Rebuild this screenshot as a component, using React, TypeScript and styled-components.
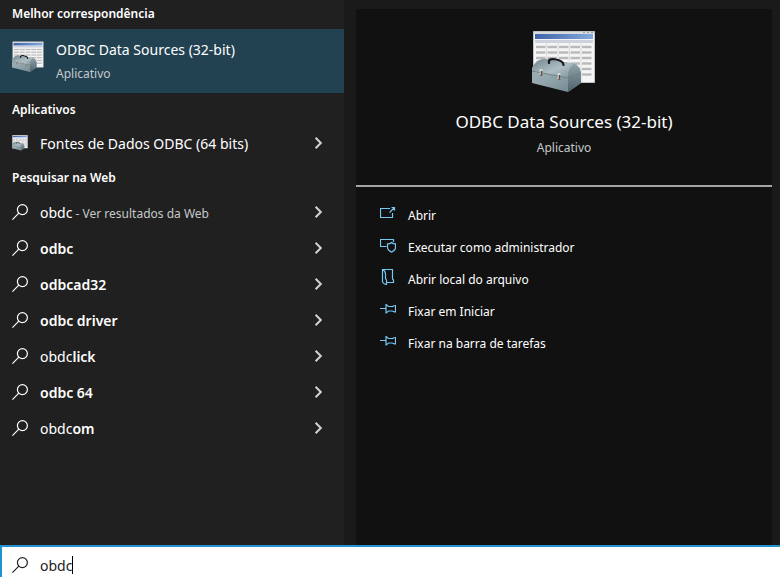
import React, { useId, useState } from "react";
import styled, { createGlobalStyle } from "styled-components";

const GlobalStyle = createGlobalStyle`
  *, *::before, *::after { box-sizing: border-box; }
  body {
    margin: 0;
    background: #1a1a1a;
    color: #fff;
    font-family: "Noto Sans", "Open Sans", sans-serif;
    font-size: 14px;
  }
  button, input { font: inherit; color: inherit; }
`;

const Page = styled.div`
  display: flex;
  flex-direction: column;
  min-height: 100vh;
`;

const Panels = styled.main`
  display: flex;
  flex: 1;
  gap: 12px;
  padding-right: 8px;
`;

const Results = styled.section`
  flex: 0 0 344px;
  background: #202020;
`;

const GroupTitle = styled.h2<{ $first?: boolean }>`
  display: flex;
  align-items: center;
  height: ${(p) => (p.$first ? 29 : 32)}px;
  margin: 0;
  padding: 0 12px ${(p) => (p.$first ? 2 : 0)}px;
  font-size: 12px;
  font-weight: 600;
`;

const BestMatch = styled.button`
  display: flex;
  align-items: flex-start;
  gap: 12px;
  width: 100%;
  height: 64px;
  padding: 12px 12px 0;
  border: 0;
  background: #224252;
  text-align: left;
`;

const BestText = styled.span`
  display: flex;
  flex-direction: column;
  gap: 6px;
  line-height: 18px;
`;

const Muted = styled.span`
  color: #c4c8ca;
  font-size: 12px;
`;

const List = styled.ul`
  margin: 0;
  padding: 1px 0 0;
  list-style: none;
`;

const Row = styled.button`
  display: flex;
  align-items: center;
  gap: 12px;
  width: 100%;
  height: 36px;
  padding: 0 20px 0 12px;
  border: 0;
  background: none;
  text-align: left;
  &:hover { background: #2d2d2d; }
`;

const RowLabel = styled.span`
  flex: 1;
  white-space: pre;
  b { font-weight: 600; }
`;

const Detail = styled.section`
  flex: 1;
  min-width: 0;
  margin-top: 9px;
  background: #111;
`;

const Hero = styled.header`
  display: flex;
  flex-direction: column;
  align-items: center;
  height: 178px;
  padding-top: 21px;
  border-bottom: 2px solid #a5a3a5;
`;

const HeroTitle = styled.h1`
  margin: 16px 0 5px;
  font-size: 17px;
  font-weight: 400;
  line-height: 24px;
`;

const Actions = styled.ul`
  margin: 0;
  padding: 12px 0;
  list-style: none;
`;

const Action = styled.button`
  display: flex;
  align-items: center;
  gap: 12px;
  width: 100%;
  height: 32px;
  padding: 0 24px;
  border: 0;
  background: none;
  font-size: 12px;
  text-align: left;
  svg { margin-bottom: 4px; }
  &:hover { background: #222; }
`;

const SearchBar = styled.label`
  display: flex;
  align-items: center;
  gap: 12px;
  height: 32px;
  padding: 6px 10px 0;
  border-top: 2px solid #2492cf;
  border-left: 2px solid #2492cf;
  background: #fff;
  color: #222;
`;

const Field = styled.span`
  display: flex;
  align-items: center;
  flex: 1;
`;

const SearchInput = styled.input`
  field-sizing: content;
  min-width: 1px;
  height: 20px;
  padding: 0;
  border: 0;
  outline: 0;
  background: none;
  caret-color: transparent;
`;

const Caret = styled.span`
  width: 1px;
  height: 18px;
  background: #000;
`;

function SearchIcon() {
  return (
    <svg width="16" height="16" viewBox="0 0 16 16" fill="none" stroke="currentColor" strokeWidth="1.2" aria-hidden="true">
      <circle cx="10.4" cy="5.6" r="5" />
      <path d="M6.8 9.2.4 15.6" />
    </svg>
  );
}

function Chevron() {
  return (
    <svg width="12" height="14" viewBox="0 0 12 14" fill="none" stroke="#d2d2d2" strokeWidth="2" aria-hidden="true">
      <path d="m3.6 1.8 5.2 5.2-5.2 5.2" />
    </svg>
  );
}

function OdbcIcon({ size }: { size: number }) {
  const id = useId();
  const rows = [17, 22.5, 28, 33.5, 39, 44.5];
  const cols = [4, 15.5, 27, 38.5, 50];
  return (
    <svg width={size} height={size} viewBox="0 0 64 64" aria-hidden="true">
      <defs>
        <linearGradient id={`${id}bar`}>
          <stop offset="0" stopColor="#3f63a8" />
          <stop offset="1" stopColor="#85aadd" />
        </linearGradient>
        <linearGradient id={`${id}front`} x1="0" y1="0" x2="1" y2="1">
          <stop offset="0" stopColor="#a3b3b9" />
          <stop offset=".45" stopColor="#94a7ae" />
          <stop offset="1" stopColor="#6e828a" />
        </linearGradient>
        <linearGradient id={`${id}lid`} x1="0" y1="0" x2="1" y2="1">
          <stop offset="0" stopColor="#71858d" />
          <stop offset=".55" stopColor="#aebec4" />
          <stop offset="1" stopColor="#7c9098" />
        </linearGradient>
        <linearGradient id={`${id}side`} x1="0" y1="0" x2="0" y2="1">
          <stop offset="0" stopColor="#8fa2a9" />
          <stop offset="1" stopColor="#4e626b" />
        </linearGradient>
      </defs>
      <path d="M1.5 1.5h61v51h-61z" fill="#f5f5f6" stroke="#c0c2c5" />
      <path d="M2 2h60v2H2z" fill="#d9dadd" />
      <path d="M51 2.5h2m2 0h2m2 0h2" stroke="#a0a4aa" />
      <path d="M3 4h58v5H3z" fill={`url(#${id}bar)`} />
      <path d="M3 10h58v3H3z" fill="#cbd2dd" />
      {rows.map((y) =>
        cols.map((x) => <path key={`${x}-${y}`} d={`M${x} ${y}h9.5`} stroke="#b9b9bb" strokeWidth="2.4" />),
      )}
      <path d="M14.500 10v42M26 10v42M37.500 10v42M49 10v42" stroke="#d5d6d8" strokeWidth=".8" />
      <path d="M0 38 5 31l7-2.500L43 34l6 9v10L36 62 0 53z" fill={`url(#${id}front)`} />
      <path d="M0 41C0 35 5 29.500 12 29l31 5c-4 1-7 5-7 14z" fill={`url(#${id}lid)`} />
      <path d="M36 48c0-8 3-13 7-14 3 1.500 5.500 4 6 9v10L36 62z" fill={`url(#${id}side)`} />
      <path d="m0 41 36 7 13-5" fill="none" stroke="#667a82" strokeWidth=".8" />
      <path d="M17 33c-1-4 3-4.500 7-3.500 5 1 7.500 2.500 7.500 5.500" fill="none" stroke="#17191b" strokeWidth="2.200" strokeLinecap="round" />
      <path d="M9 39v6M27 43v6" stroke="#d5dada" strokeWidth="2.600" />
      <path d="M9.500 41v4M27.500 45v4" stroke="#594a45" strokeWidth="1.500" />
      <path d="M8 45.500h2.500M26 49.500h2.500" stroke="#82614f" />
    </svg>
  );
}

type ActionKind = "open" | "admin" | "folder" | "pin";

function ActionIcon({ kind }: { kind: ActionKind }) {
  return (
    <svg width="16" height="16" viewBox="0 0 16 16" fill="none" stroke="#76c8f4" strokeWidth="1.2" aria-hidden="true">
      {kind === "open" && <path d="M10 3.500H.5v9h12V8M9.500 7.500l5-5M11.500 2.500h3V5.500" />}
      {kind === "admin" && (
        <path d="M6.500 9.500h-6v-7h13V5M11.500 5.500c1 1 2 1.400 4 1.400v3.200c0 2.400-1.500 4-4 5-2.500-1-4-2.600-4-5V6.900c2 0 3-.4 4-1.400z" />
      )}
      {kind === "folder" && (
        <path d="M2.500.5h10v9.500l1 1v2.500H6.500M2.500.5v12.500c1 1.500 2 2.500 4 2.500V11l-1-1.500V5C5.500 3 4.500 1.500 2.500.5z" />
      )}
      {kind === "pin" && (
        <path d="M0 7.500h6M6 3.500c1 0 1.500 2 3 2h3c1.500 0 1.500-1 3.500-1v6.500c-2 0-2-1-3.500-1H9c-1.500 0-2 2-3 2z" />
      )}
    </svg>
  );
}

const suggestions: { start?: string; bold?: string; note?: string }[] = [
  { start: "obdc", note: " - Ver resultados da Web" },
  { bold: "odbc" },
  { bold: "odbcad32" },
  { bold: "odbc driver" },
  { start: "obdc", bold: "lick" },
  { bold: "odbc 64" },
  { start: "obdc", bold: "om" },
];

const actions: { kind: ActionKind; label: string }[] = [
  { kind: "open", label: "Abrir" },
  { kind: "admin", label: "Executar como administrador" },
  { kind: "folder", label: "Abrir local do arquivo" },
  { kind: "pin", label: "Fixar em Iniciar" },
  { kind: "pin", label: "Fixar na barra de tarefas" },
];

export default function App() {
  const [query, setQuery] = useState("obdc");
  return (
    <Page>
      <GlobalStyle />
      <Panels>
        <Results>
          <GroupTitle $first>Melhor correspondência</GroupTitle>
          <BestMatch type="button">
            <OdbcIcon size={32} />
            <BestText>
              <span>ODBC Data Sources (32-bit)</span>
              <Muted>Aplicativo</Muted>
            </BestText>
          </BestMatch>
          <GroupTitle>Aplicativos</GroupTitle>
          <Row type="button">
            <OdbcIcon size={16} />
            <RowLabel>Fontes de Dados ODBC (64 bits)</RowLabel>
            <Chevron />
          </Row>
          <GroupTitle>Pesquisar na Web</GroupTitle>
          <List>
            {suggestions.map((s, i) => (
              <li key={i}>
                <Row type="button">
                  <SearchIcon />
                  <RowLabel>
                    {s.start}
                    {s.bold && <b>{s.bold}</b>}
                    {s.note && <Muted>{s.note}</Muted>}
                  </RowLabel>
                  <Chevron />
                </Row>
              </li>
            ))}
          </List>
        </Results>
        <Detail>
          <Hero>
            <OdbcIcon size={64} />
            <HeroTitle>ODBC Data Sources (32-bit)</HeroTitle>
            <Muted>Aplicativo</Muted>
          </Hero>
          <Actions>
            {actions.map((a) => (
              <li key={a.label}>
                <Action type="button">
                  <ActionIcon kind={a.kind} />
                  {a.label}
                </Action>
              </li>
            ))}
          </Actions>
        </Detail>
      </Panels>
      <SearchBar>
        <SearchIcon />
        <Field>
          <SearchInput aria-label="Pesquisar" value={query} onChange={(e) => setQuery(e.target.value)} />
          <Caret />
        </Field>
      </SearchBar>
    </Page>
  );
}
